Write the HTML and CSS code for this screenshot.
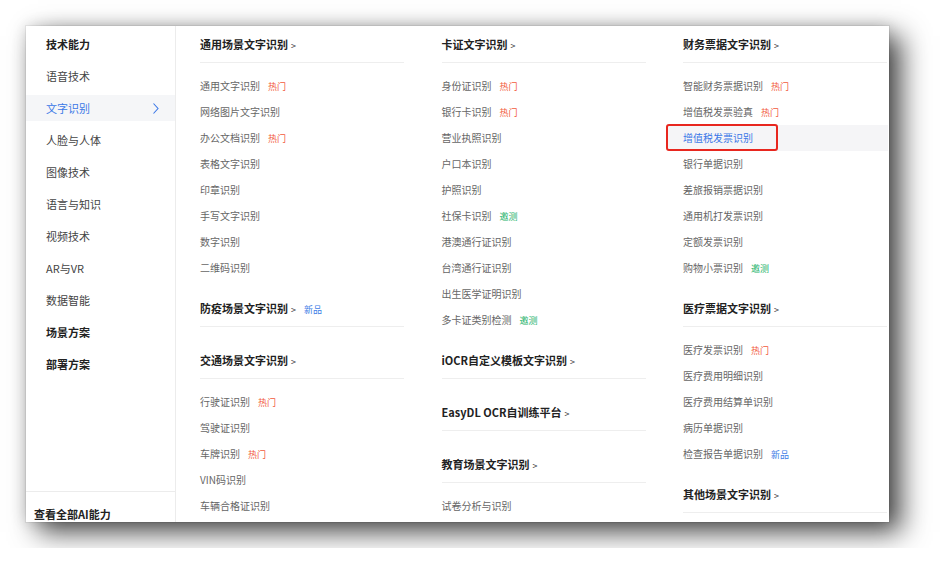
FILE: index.html
```html
<!DOCTYPE html>
<html lang="zh-CN">
<head>
    <meta charset="UTF-8">
    <title>文字识别</title>
    <link rel="stylesheet" href="styles.css">
</head>
<body>

<!-- Product menu -->
<div class="menu-card">
    <div class="sidebar">
        <div class="side-item strong">技术能力</div>
        <div class="side-item">语音技术</div>
        <div class="side-item active">文字识别
            <svg class="chevron" width="6" height="11" viewBox="0 0 6 11"><polyline points="0.5,0.5 5,5.5 0.5,10.5" fill="none" stroke="#3b78e7" stroke-width="1.1"/></svg>
        </div>
        <div class="side-item">人脸与人体</div>
        <div class="side-item">图像技术</div>
        <div class="side-item">语言与知识</div>
        <div class="side-item">视频技术</div>
        <div class="side-item">AR与VR</div>
        <div class="side-item">数据智能</div>
        <div class="side-item strong">场景方案</div>
        <div class="side-item strong">部署方案</div>
        <div class="side-bottom">查看全部AI能力</div>
    </div>

    <div class="columns">
        <!-- column 1 -->
        <div class="column">
            <div class="group">
                <div class="group-title">通用场景文字识别<span class="arrow">&gt;</span></div>
                <ul class="items">
                    <li>通用文字识别<span class="tag hot">热门</span></li>
                    <li>网络图片文字识别</li>
                    <li>办公文档识别<span class="tag hot">热门</span></li>
                    <li>表格文字识别</li>
                    <li>印章识别</li>
                    <li>手写文字识别</li>
                    <li>数字识别</li>
                    <li>二维码识别</li>
                </ul>
            </div>
            <div class="group empty">
                <div class="group-title">防疫场景文字识别<span class="arrow">&gt;</span><span class="tag new">新品</span></div>
            </div>
            <div class="group">
                <div class="group-title">交通场景文字识别<span class="arrow">&gt;</span></div>
                <ul class="items">
                    <li>行驶证识别<span class="tag hot">热门</span></li>
                    <li>驾驶证识别</li>
                    <li>车牌识别<span class="tag hot">热门</span></li>
                    <li>VIN码识别</li>
                    <li>车辆合格证识别</li>
                </ul>
            </div>
        </div>

        <!-- column 2 -->
        <div class="column">
            <div class="group">
                <div class="group-title">卡证文字识别<span class="arrow">&gt;</span></div>
                <ul class="items">
                    <li>身份证识别<span class="tag hot">热门</span></li>
                    <li>银行卡识别<span class="tag hot">热门</span></li>
                    <li>营业执照识别</li>
                    <li>户口本识别</li>
                    <li>护照识别</li>
                    <li>社保卡识别<span class="tag beta">邀测</span></li>
                    <li>港澳通行证识别</li>
                    <li>台湾通行证识别</li>
                    <li>出生医学证明识别</li>
                    <li>多卡证类别检测<span class="tag beta">邀测</span></li>
                </ul>
            </div>
            <div class="group empty">
                <div class="group-title">iOCR自定义模板文字识别<span class="arrow">&gt;</span></div>
            </div>
            <div class="group empty">
                <div class="group-title">EasyDL OCR自训练平台<span class="arrow">&gt;</span></div>
            </div>
            <div class="group">
                <div class="group-title">教育场景文字识别<span class="arrow">&gt;</span></div>
                <ul class="items">
                    <li>试卷分析与识别</li>
                </ul>
            </div>
        </div>

        <!-- column 3 -->
        <div class="column">
            <div class="group">
                <div class="group-title">财务票据文字识别<span class="arrow">&gt;</span></div>
                <ul class="items">
                    <li>智能财务票据识别<span class="tag hot">热门</span></li>
                    <li>增值税发票验真<span class="tag hot">热门</span></li>
                    <li class="current">增值税发票识别<span class="mark"></span></li>
                    <li>银行单据识别</li>
                    <li>差旅报销票据识别</li>
                    <li>通用机打发票识别</li>
                    <li>定额发票识别</li>
                    <li>购物小票识别<span class="tag beta">邀测</span></li>
                </ul>
            </div>
            <div class="group">
                <div class="group-title">医疗票据文字识别<span class="arrow">&gt;</span></div>
                <ul class="items">
                    <li>医疗发票识别<span class="tag hot">热门</span></li>
                    <li>医疗费用明细识别</li>
                    <li>医疗费用结算单识别</li>
                    <li>病历单据识别</li>
                    <li>检查报告单据识别<span class="tag new">新品</span></li>
                </ul>
            </div>
            <div class="group empty">
                <div class="group-title">其他场景文字识别<span class="arrow">&gt;</span></div>
            </div>
        </div>
    </div>
</div>

</body>
</html>
```

FILE: styles.css
```css
/* styles.css */
body {
    margin: 0;
    padding: 26px;
    background: #fff;
    font-family: "Noto Sans CJK SC", "Noto Sans", sans-serif;
}

.menu-card {
    display: flex;
    width: 863px;
    height: 496px;
    background: #fff;
    overflow: hidden;
    box-shadow: 0 0 0 1px rgba(0, 0, 0, 0.06), 12px 10px 26px rgba(0, 0, 0, 0.72), 0 0 14px rgba(0, 0, 0, 0.14);
}

/* left nav */
.sidebar {
    display: flex;
    flex-direction: column;
    width: 150px;
    flex-shrink: 0;
    border-right: 1px solid #ececec;
    padding-top: 5px;
    box-sizing: border-box;
}

.side-item {
    position: relative;
    height: 26px;
    line-height: 26px;
    margin-bottom: 6px;
    padding-left: 20px;
    font-size: 11px;
    color: #444;
}

.side-item.strong {
    font-weight: bold;
    color: #222;
}

.side-item.active {
    background: #f5f6f8;
    color: #3b78e7;
}

.chevron {
    position: absolute;
    right: 16px;
    top: 8px;
}

.side-bottom {
    margin-top: auto;
    height: 31px;
    padding: 12px 0 0 8px;
    box-sizing: border-box;
    border-top: 1px solid #ececec;
    font-size: 11px;
    line-height: 20px;
    font-weight: bold;
    color: #222;
}

/* columns */
.columns {
    display: grid;
    grid-template-columns: repeat(3, 204px);
    column-gap: 37.5px;
    padding-left: 24px;
}

.group {
    margin-bottom: 9px;
}

.group.empty {
    margin-bottom: 15px;
}

.group-title {
    height: 36px;
    line-height: 36px;
    border-bottom: 1px solid #eeeeee;
    font-size: 11px;
    font-weight: bold;
    color: #222;
}

.arrow {
    font-size: 9px;
    font-weight: normal;
    color: #333;
    margin-left: 3px;
}

.items {
    list-style: none;
    margin: 0;
    padding: 10px 0 0;
}

.items li {
    position: relative;
    height: 26px;
    line-height: 26px;
    font-size: 10px;
    color: #666;
}

.items li.current {
    margin: 0 -1px 0 -15px;
    padding-left: 15px;
    background: #f5f5f7;
    color: #3b78e7;
}

.mark {
    position: absolute;
    left: -2px;
    top: -1px;
    width: 108px;
    height: 23px;
    border: 2.5px solid #e8271f;
    border-radius: 3px;
}

.tag {
    margin-left: 8px;
    font-size: 9px;
    font-weight: normal;
}

.tag.hot {
    color: #f25a3c;
}

.tag.beta {
    color: #1fb46c;
}

.tag.new {
    color: #3b7de6;
}
```
